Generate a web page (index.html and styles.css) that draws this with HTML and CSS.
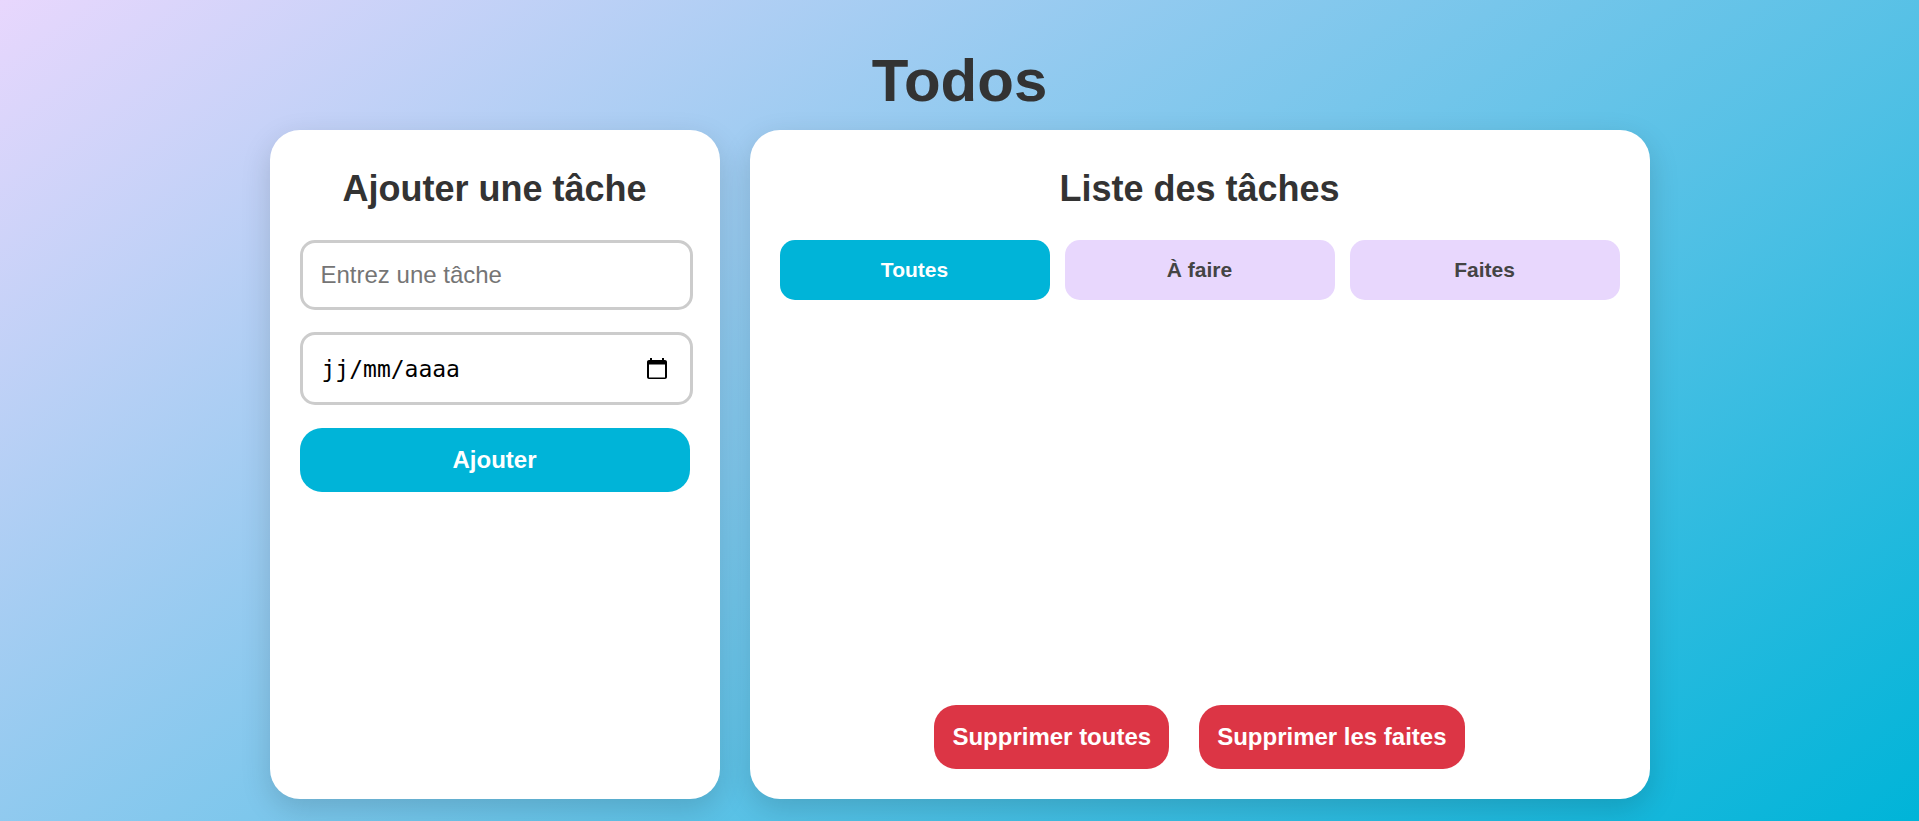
FILE: index.html
```html
<!DOCTYPE html>
<html lang="fr">
<head>
<meta charset="utf-8">
<meta name="viewport" content="width=device-width, initial-scale=1">
<title>Todos</title>
<link rel="stylesheet" href="styles.css">
</head>
<body>
<h1 class="title">Todos</h1>
<main class="board">
  <section class="card">
    <h2 class="card-title">Ajouter une tâche</h2>
    <form class="form">
      <input class="field" type="text" placeholder="Entrez une tâche" aria-label="Entrez une tâche">
      <div class="field date">
        <input class="date-input" type="text" placeholder="jj/mm/aaaa" aria-label="Date">
        <button class="date-button" type="button" aria-label="Ouvrir le calendrier">
          <svg class="date-icon" viewBox="0 0 24 24" aria-hidden="true"><path d="M20 3h-1V1h-2v2H7V1H5v2H4c-1.100 0-2 .9-2 2v15c0 1.100.9 2 2 2h16c1.100 0 2-.9 2-2V5c0-1.100-.9-2-2-2zm0 17.500H4V7.500h16v13z"/></svg>
        </button>
      </div>
      <button class="action submit" type="submit">Ajouter</button>
    </form>
  </section>
  <section class="card">
    <h2 class="card-title">Liste des tâches</h2>
    <div class="filters">
      <button class="filter active" type="button">Toutes</button>
      <button class="filter" type="button">À faire</button>
      <button class="filter" type="button">Faites</button>
    </div>
    <div class="cleanup">
      <button class="action danger" type="button">Supprimer toutes</button>
      <button class="action danger" type="button">Supprimer les faites</button>
    </div>
  </section>
</main>
</body>
</html>
```
FILE: styles.css
```css
* {
  box-sizing: border-box;
}

body {
  display: flex;
  flex-direction: column;
  align-items: center;
  min-height: 100vh;
  margin: 0;
  padding: 46px 20px 22px;
  font-family: "Liberation Sans", Arial, sans-serif;
  color: #333;
  background: linear-gradient(145deg, #e8d7fd, #00b4d8);
}

.title {
  margin: 0 0 14px;
  font-size: 60px;
  line-height: 70px;
}

.board {
  display: grid;
  flex: 1;
  grid-template-columns: 1fr 2fr;
  gap: 30px;
  width: 100%;
  max-width: 1380px;
}

.card {
  display: flex;
  flex-direction: column;
  padding: 30px;
  border-radius: 30px;
  background: #fff;
  box-shadow: 0 10px 30px rgba(0, 0, 0, 0.15);
}

.card-title {
  margin: 6px 0 29px;
  font-size: 36px;
  line-height: 45px;
  text-align: center;
}

.form {
  display: flex;
  flex-direction: column;
}

.field {
  width: calc(100% + 3px);
  height: 70px;
  margin-bottom: 22px;
  padding: 0 18px;
  border: 3px solid #ccc;
  border-radius: 15px;
  background: #fff;
  font: 24px "Liberation Sans", Arial, sans-serif;
}

.field::placeholder {
  color: #757575;
}

.date {
  display: flex;
  align-items: center;
  height: 73px;
  margin-bottom: 23px;
}

.date-input {
  flex: 1;
  min-width: 0;
  padding: 1px 1px 0;
  border: 0;
  outline: 0;
  background: none;
  font: 23px "DejaVu Sans Mono", monospace;
}

.date-input::placeholder {
  color: #000;
}

.date-button {
  display: flex;
  padding: 3px;
  border: 0;
  background: none;
}

.date-icon {
  width: 24px;
  height: 24px;
}

.action {
  height: 64px;
  padding: 0 18px;
  border: 0;
  border-radius: 22px;
  color: #fff;
  font: bold 24px "Liberation Sans", Arial, sans-serif;
}

.submit {
  background: #00b4d8;
}

.filters {
  display: flex;
  gap: 15px;
}

.filter {
  flex: 1;
  height: 60px;
  border: 0;
  border-radius: 15px;
  color: #444;
  background: #e8d7fd;
  font: bold 21px "Liberation Sans", Arial, sans-serif;
}

.filter.active {
  color: #fff;
  background: #00b4d8;
}

.cleanup {
  display: flex;
  justify-content: center;
  gap: 30px;
  margin-top: auto;
}

.danger {
  background: #dc3545;
}
```
